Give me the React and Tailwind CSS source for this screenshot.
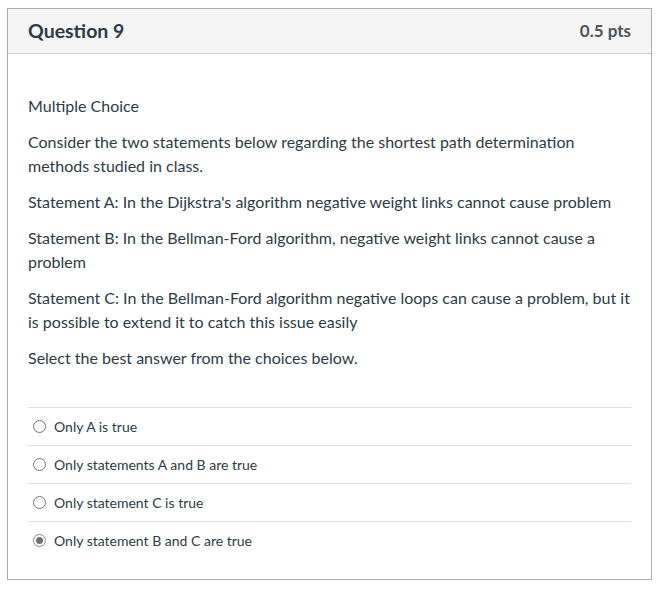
export default function App() {
  const answers = [
    { t: "Only A is true", c: false },
    { t: "Only statements A and B are true", c: false },
    { t: "Only statement C is true", c: false },
    { t: "Only statement B and C are true", c: true },
  ];
  return (
    <div className="bg-white w-[671px] h-[589px] pt-[8px] pl-[7px]" style={{ fontFamily: "Lato, 'Open Sans', sans-serif" }}>
      <div className="w-[645px] border border-[#a8adb1] text-[#2d3b45]">
        <div className="h-[45px] bg-[#f5f5f5] border-b border-[#c7cdd1] flex items-center justify-between px-[20px]">
          <span className="text-[19.5px] font-bold">Question 9</span>
          <span className="text-[17px] font-bold text-[#4a5560]">0.5 pts</span>
        </div>
        <div className="px-[20px] pt-[40px] text-[16px] leading-[24px]">
          <p className="mb-[12px]">Multiple Choice</p>
          <p className="mb-[12px]">Consider the two statements below regarding the shortest path determination methods studied in class.</p>
          <p className="mb-[12px]">Statement A: In the Dijkstra's algorithm negative weight links cannot cause problem</p>
          <p className="mb-[12px]">Statement B: In the Bellman-Ford algorithm, negative weight links cannot cause a problem</p>
          <p className="mb-[12px]">Statement C: In the Bellman-Ford algorithm negative loops can cause a problem, but it is possible to extend it to catch this issue easily</p>
          <p>Select the best answer from the choices below.</p>
        </div>
        <div className="px-[20px] pt-[37px] pb-[20px]">
          {answers.map((a, i) => (
            <div key={i} className="h-[38px] flex items-center pl-[5px] border-t border-[#dfe2e4]">
              <span className={`w-[13px] h-[13px] rounded-full border flex items-center justify-center ${a.c ? "border-[#8a8a8a]" : "border-[#767676]"}`}>
                {a.c && <span className="w-[7px] h-[7px] rounded-full bg-[#707070]" />}
              </span>
              <span className="ml-[8px] text-[14px] text-[#2d3b45]">{a.t}</span>
            </div>
          ))}
        </div>
      </div>
    </div>
  );
}
